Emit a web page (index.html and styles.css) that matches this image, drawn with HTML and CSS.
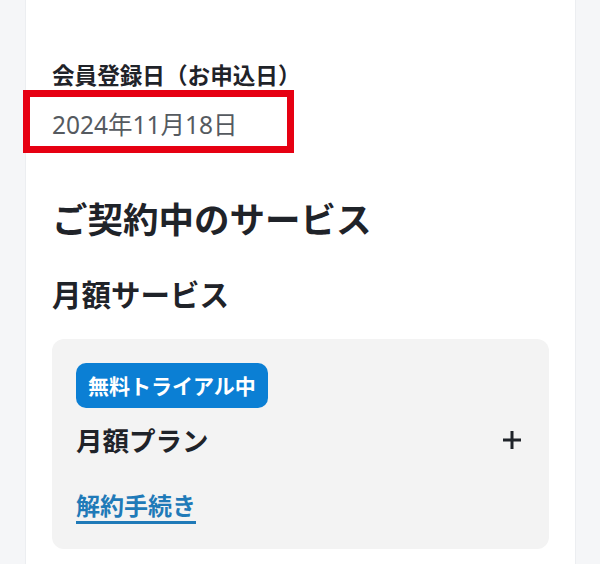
FILE: index.html
```html
<!DOCTYPE html>
<html lang="ja">
<head>
  <meta charset="utf-8">
  <title>会員情報</title>
  <link rel="stylesheet" href="styles.css">
</head>
<body>
  <div class="card">
    <div class="label">会員登録日（お申込日）</div>
    <div class="date-box">
      <span class="date">2024年11月18日</span>
    </div>

    <h1 class="title">ご契約中のサービス</h1>
    <h2 class="subtitle">月額サービス</h2>

    <div class="plan">
      <span class="badge">無料トライアル中</span>
      <div class="plan-row">
        <span class="plan-name">月額プラン</span>
        <svg class="plus" width="20" height="20" viewBox="0 0 20 20">
          <path d="M10 1v18M1 10h18" stroke="#1f2329" stroke-width="3" fill="none"/>
        </svg>
      </div>
      <a class="cancel" href="#">解約手続き</a>
    </div>
  </div>
</body>
</html>
```

FILE: styles.css
```css
body {
  margin: 0;
  background-color: #f5f6f8;
  font-family: "Noto Sans CJK JP", "Noto Sans", sans-serif;
  color: #1f2329;
}

.card {
  margin-left: 25px;
  width: 551px;
  min-height: 564px;
  box-sizing: border-box;
  background-color: #fff;
  border-left: 1px solid #eceef1;
  border-right: 1px solid #eceef1;
  padding: 60px 26px 0 26px;
}

.label {
  font-size: 22.6px;
  line-height: 30px;
  font-weight: bold;
}

.date-box {
  margin-left: -29px;
  width: 271px;
  height: 63px;
  box-sizing: border-box;
  border: 7px solid #e60012;
  padding: 5px 0 0 22px;
}

.date {
  font-family: "Noto Sans", "Noto Sans CJK JP", sans-serif;
  font-size: 24.5px;
  line-height: 45px;
  color: #555a60;
}

.title {
  margin: 41px 0 0;
  font-size: 35.5px;
  line-height: 48px;
  font-weight: bold;
}

.subtitle {
  margin: 31px 0 0;
  font-size: 29.5px;
  line-height: 40px;
  font-weight: bold;
}

.plan {
  margin-top: 26px;
  background-color: #f3f3f3;
  border-radius: 12px;
  padding: 24px 27px 27px 24px;
}

.badge {
  display: inline-block;
  background-color: #0b7fd4;
  color: #fff;
  font-size: 21px;
  font-weight: bold;
  line-height: 45px;
  padding: 0 12px;
  border-radius: 10px;
}

.plan-row {
  margin-top: 14px;
  display: flex;
  justify-content: space-between;
  align-items: center;
  height: 36px;
}

.plan-name {
  font-size: 26.5px;
  line-height: 36px;
  font-weight: bold;
}

.cancel {
  display: inline-block;
  margin-top: 30px;
  font-size: 24px;
  line-height: 34px;
  font-weight: bold;
  color: #1f7ab8;
  text-decoration: underline;
  text-decoration-thickness: 3px;
  text-underline-offset: 6px;
}
```
